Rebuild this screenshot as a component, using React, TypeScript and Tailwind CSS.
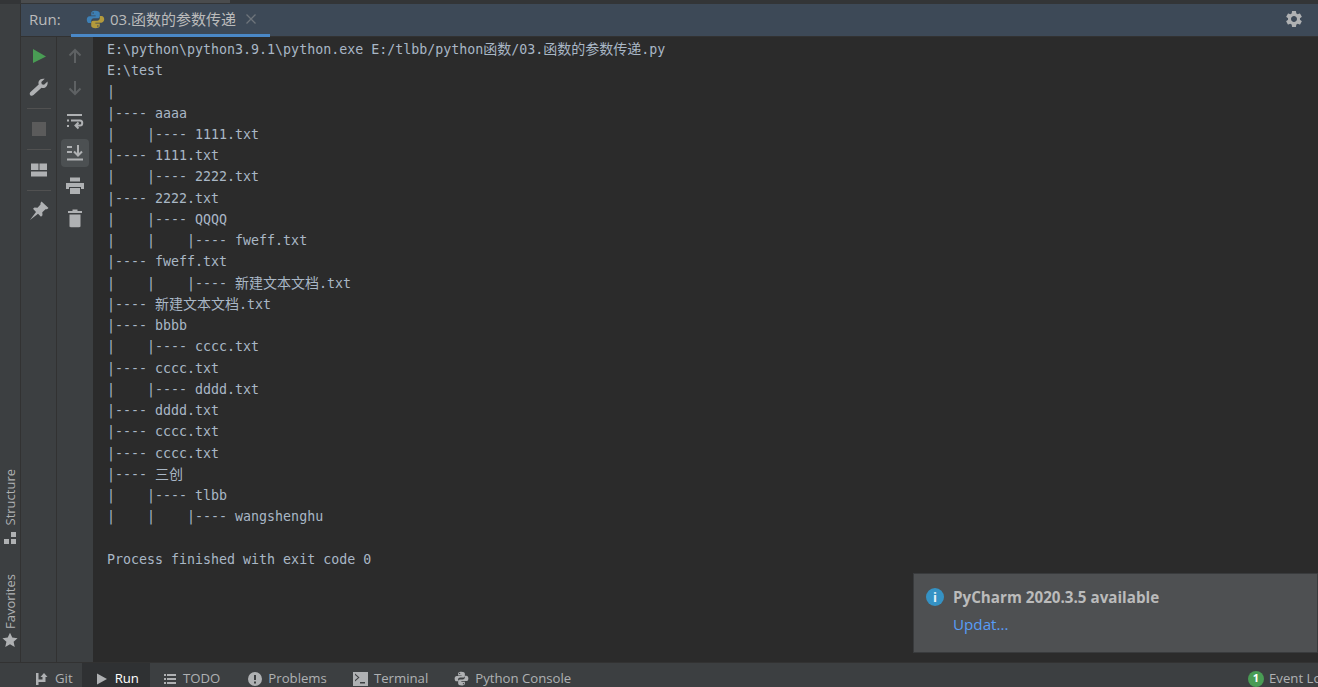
import { MdSettings } from 'react-icons/md';

const MONO = "font-['DejaVu_Sans_Mono','Noto_Sans_CJK_SC',monospace]";
const UI = "font-['Open_Sans','Noto_Sans','Noto_Sans_CJK_SC',sans-serif]";

const lines = [
    'E:\\python\\python3.9.1\\python.exe E:/tlbb/python函数/03.函数的参数传递.py',
    'E:\\test',
    '|',
    '|---- aaaa',
    '|    |---- 1111.txt',
    '|---- 1111.txt',
    '|    |---- 2222.txt',
    '|---- 2222.txt',
    '|    |---- QQQQ',
    '|    |    |---- fweff.txt',
    '|---- fweff.txt',
    '|    |    |---- 新建文本文档.txt',
    '|---- 新建文本文档.txt',
    '|---- bbbb',
    '|    |---- cccc.txt',
    '|---- cccc.txt',
    '|    |---- dddd.txt',
    '|---- dddd.txt',
    '|---- cccc.txt',
    '|---- cccc.txt',
    '|---- 三创',
    '|    |---- tlbb',
    '|    |    |---- wangshenghu',
    ' ',
    'Process finished with exit code 0',
];

// CJK runs are 14px wide in the console, latin cells are 8px
function ConsoleLine({ text }: { text: string }) {
    const parts = text.split(/([\u4e00-\u9fff]+)/);
    return (
        <div className="h-[21.25px] leading-[21.25px] whitespace-pre">
            {parts.map((p, i) => (i % 2 === 1 ? <span key={i} className="text-[14px]">{p}</span> : <span key={i}>{p}</span>))}
        </div>
    );
}

function PythonLogo({ size, mono }: { size: number; mono?: boolean }) {
    return (
        <svg width={size} height={size} viewBox="0 0 24 24">
            <path fill={mono ? '#afb1b3' : '#3d7fb5'} d="M11.8 1C7 1 6.6 3 6.6 4.6V7h5.6v1H4.4C2.4 8 1 9.8 1 12.2s1.3 4.3 3.2 4.3H6.500v-2.600c0-1.900 1.600-3.400 3.500-3.400h4.700c1.500 0 2.700-1.200 2.700-2.700V4.200C17.400 2.400 15.500 1 11.800 1zM9 2.800a1 1 0 1 1 0 2 1 1 0 0 1 0-2z" />
            <path fill={mono ? '#afb1b3' : '#b39a3c'} d="M12.200 23c4.800 0 5.200-2 5.200-3.600V17h-5.600v-1h7.800c2 0 3.400-1.800 3.400-4.200s-1.300-4.300-3.200-4.300h-2.300v2.600c0 1.900-1.600 3.400-3.500 3.400H9.300c-1.500 0-2.700 1.200-2.700 2.700v3.600C6.600 21.600 8.500 23 12.200 23zM15 21.200a1 1 0 1 1 0-2 1 1 0 0 1 0 2z" />
        </svg>
    );
}

function ToolIcon({ children, active }: { children: React.ReactNode; active?: boolean }) {
    return (
        <div className={`w-7 h-7 rounded-[4px] flex items-center justify-center ${active ? 'bg-[#4c5052]' : ''}`}>
            <svg width="20" height="20" viewBox="0 0 20 20">{children}</svg>
        </div>
    );
}

function LeftRail() {
    const sep = <div className="w-6 h-px my-[2px] bg-[#515151]" />;
    return (
        <div className="w-[36px] flex flex-col items-center pt-[5px] gap-[4px] border-r border-[#323232] shrink-0">
            <ToolIcon><path fill="#499c54" d="M4 3l13 7.500L4 17z" /></ToolIcon>
            <ToolIcon><path fill="#afb1b3" d="M18.500 3.500l-3.500 3.200-2.200-.5-.5-2.200L15.800 .8c-2.800-.6-5.800.6-6.300 3.200-.2 1 0 1.800.2 2.500L1.500 14c-1 1-1 2.400-.2 3.200s2.200.8 3.200-.2L12.500 9.800c.8.3 1.600.4 2.500.2 2.500-.5 4.200-3.200 3.500-6.500z" /></ToolIcon>
            {sep}
            <ToolIcon><rect x="3" y="3" width="14" height="14" fill="#5b5b5b" /></ToolIcon>
            {sep}
            <ToolIcon><path fill="#afb1b3" d="M2 3.500h7.500v6.500H2zM10.500 3.500H18v6.500h-7.500zM2 11.500h16v5H2z" /></ToolIcon>
            {sep}
            <ToolIcon><path fill="#afb1b3" d="M12.500 .5l7 6.500-1.500 1.300-1.500 0-3.200 3 .2 3-1.500 1.500-3-3L1 19l6-8-3-3.200 1.500-1.300 3 .3 3-3.200 0-1.700z" /></ToolIcon>
        </div>
    );
}

function ActionRail() {
    return (
        <div className="w-[36px] flex flex-col items-center pt-[5px] gap-[4.400px] shrink-0">
            <ToolIcon><path fill="none" stroke="#5e6163" strokeWidth="2" d="M10 17V4M4.500 9.500L10 4l5.500 5.500" /></ToolIcon>
            <ToolIcon><path fill="none" stroke="#5e6163" strokeWidth="2" d="M10 3v13M4.500 10.500L10 16l5.500-5.500" /></ToolIcon>
            <ToolIcon><path fill="none" stroke="#afb1b3" strokeWidth="2" d="M2 4h15M6 9.500h9c3 0 3 5 0 5h-4M13.500 11.500l-3 3 3 3M2 9.500h2M2 15h2" /></ToolIcon>
            <ToolIcon active><path fill="none" stroke="#afb1b3" strokeWidth="2" d="M2 4h5M2 9h5M2 16.500h16M13 2v10M9 8.500l4 4 4-4" /></ToolIcon>
            <ToolIcon><path fill="#afb1b3" d="M5 1.500h10v4H5zM1 7h18v6h-3v-2H4v2H1zM5 12h10v6H5z" /></ToolIcon>
            <ToolIcon><path fill="#afb1b3" d="M7.500 1.500h5v1.500H17v2H3V3h4.500zM4.500 6.500h11V18c0 .8-.6 1.200-1.200 1.200H5.700c-.6 0-1.200-.4-1.200-1.200z" /></ToolIcon>
        </div>
    );
}

function SideStripe() {
    return (
        <div className={`w-[21px] shrink-0 border-r border-[#323232] flex flex-col justify-end items-center pb-[14px] text-[#afb1b3] text-[13px] ${UI}`}>
            <span className="[writing-mode:vertical-rl] rotate-180 leading-[18px]">Structure</span>
            <svg width="14" height="14" viewBox="0 0 14 14" className="mt-[6px] mb-[29px]">
                <path fill="#afb1b3" d="M8 1h5v5H8zM1 8h5v5H1zM8 8h5v5H8z" />
            </svg>
            <span className="[writing-mode:vertical-rl] rotate-180 leading-[18px]">Favorites</span>
            <svg width="16" height="16" viewBox="0 0 24 24" className="mt-[3px]">
                <path fill="#afb1b3" d="M12 1l3.400 7.300 7.900.9-5.900 5.400 1.700 7.900L12 18.500l-7.100 4 1.700-7.900L.7 9.200l7.900-.9z" />
            </svg>
        </div>
    );
}

function BottomTab({ label, icon, active, className }: { label: string; icon: React.ReactNode; active?: boolean; className?: string }) {
    return (
        <div className={`h-full flex items-center gap-[6px] pl-[13px] pt-[7px] ${className ?? 'pr-[13px]'} ${active ? 'bg-[#2f3133] text-white' : 'text-[#afb1b3]'}`}>
            {icon}
            <span>{label}</span>
        </div>
    );
}

export default function App() {
    return (
        <div className={`relative w-[1318px] h-[687px] overflow-hidden flex flex-col bg-[#3c3f41] ${UI}`}>
            {/* top scrollbar remnant */}
            <div className="h-[4px] shrink-0 bg-[#333537] pl-[21px]">
                <div className="w-[209px] h-[3px] bg-[#4a4c4e]" />
            </div>

            <div className="flex-1 flex min-h-0">
                <SideStripe />
                <div className="flex-1 flex flex-col min-w-0">
                    <div className="h-[33px] shrink-0 bg-[#3d4957] flex items-center text-[#bbbbbb] text-[15px] border-b border-[#323232]">
                        <span className="ml-[8px] w-[42px] pb-[2px]">Run:</span>
                        <div className="relative h-full w-[199px] flex items-center pl-[15px] gap-[5px] pb-[2px]">
                            <PythonLogo size={19} />
                            <span className="whitespace-nowrap">03.函数的参数传递</span>
                            <svg width="12" height="12" viewBox="0 0 12 12" className="ml-[4px] shrink-0">
                                <path stroke="#6e747b" strokeWidth="1.300" d="M1.500 1.500l9 9M10.500 1.500l-9 9" />
                            </svg>
                            <div className="absolute left-0 right-0 bottom-[-1px] h-[3px] bg-[#4a88c7]" />
                        </div>
                        <MdSettings size={20} className="ml-auto mr-[14px] mb-[2px] text-[#afb1b3]" />
                    </div>
                    <div className="flex-1 flex min-h-0">
                        <LeftRail />
                        <ActionRail />
                        <div className={`flex-1 bg-[#2b2b2b] pl-[14px] pt-[1.900px] text-[13.3px] text-[#a9b7c6] ${MONO}`}>
                            {lines.map((l, i) => <ConsoleLine key={i} text={l} />)}
                        </div>
                    </div>
                </div>
            </div>

            <div className="h-[25px] shrink-0 border-t border-[#323232] flex items-center pl-[22px] text-[13.200px]">
                <BottomTab className="pr-[9px]" label="Git" icon={<svg width="14" height="14" viewBox="0 0 14 14"><path fill="#afb1b3" d="M1 1h2.500v12H1zM3.500 7.500h4V5H5.500l3.500-4 3.500 4H10.500v5H3.500z" /></svg>} />
                <BottomTab active className="pr-[11px]" label="Run" icon={<svg width="14" height="14" viewBox="0 0 14 14"><path fill="#afb1b3" d="M2 1.500l10 5.500-10 5.500z" /></svg>} />
                <BottomTab label="TODO" icon={<svg width="14" height="14" viewBox="0 0 14 14"><path fill="#afb1b3" d="M1 2h2v2H1zM4 2h9v2H4zM1 6h2v2H1zM4 6h9v2H4zM1 10h2v2H1zM4 10h9v2H4z" /></svg>} />
                <BottomTab className="pr-[13px] pl-[15px]" label="Problems" icon={<svg width="14" height="14" viewBox="0 0 14 14"><path fill="#afb1b3" fillRule="evenodd" d="M7 0a7 7 0 1 1 0 14A7 7 0 0 1 7 0zM6 3v5h2V3zM6 9.500v2h2v-2z" /></svg>} />
                <BottomTab label="Terminal" icon={<svg width="15" height="14" viewBox="0 0 15 14"><path fill="#afb1b3" fillRule="evenodd" d="M0 0h15v14H0zM2 3l3 2.500L2 8v1.500l4.500-4L2 1.500zM7 10v1.500h5V10z" /></svg>} />
                <BottomTab label="Python Console" icon={<PythonLogo size={15} mono />} />
                <div className="ml-auto flex items-center gap-[5px] text-[#afb1b3] pt-[7px] whitespace-nowrap w-[70px]">
                    <span className="w-4 h-4 rounded-full bg-[#499c54] text-white text-[11px] font-bold flex items-center justify-center shrink-0">1</span>
                    <span>Event Log</span>
                </div>
            </div>

            {/* update balloon */}
            <div className="absolute left-[913px] top-[573px] w-[405px] h-[80px] bg-[#4e5052] border border-[#393b3d] pl-[12px] pt-[12px]">
                <div className="flex items-center gap-[9px]">
                    <span className="w-[18px] h-[18px] rounded-full bg-[#3592c4] text-[#e6f2f8] text-[13px] font-bold flex items-center justify-center">i</span>
                    <span className="text-[15.200px] font-bold text-[#bbbbbb]">PyCharm 2020.3.5 available</span>
                </div>
                <div className="ml-[27px] mt-[4px] text-[15.200px] text-[#589df6]">Updat...</div>
            </div>
        </div>
    );
}
